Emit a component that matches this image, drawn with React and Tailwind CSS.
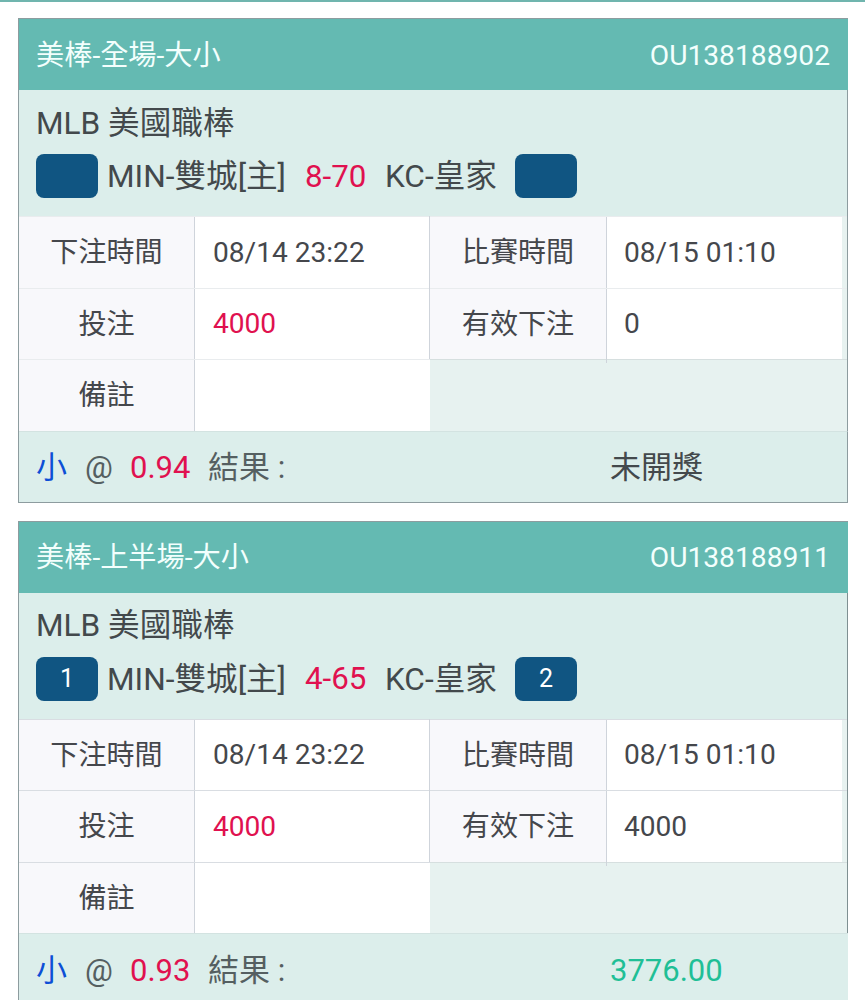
import clsx from "clsx";

const bets = [
  {
    id: "OU138188902",
    type: "美棒-全場-大小",
    league: "MLB 美國職棒",
    home: "MIN-雙城[主]",
    homeScore: "",
    line: "8-70",
    away: "KC-皇家",
    awayScore: "",
    betTime: "08/14 23:22",
    gameTime: "08/15 01:10",
    stake: "4000",
    validStake: "0",
    pick: "小",
    odds: "0.94",
    result: "未開獎",
    settled: false,
  },
  {
    id: "OU138188911",
    type: "美棒-上半場-大小",
    league: "MLB 美國職棒",
    home: "MIN-雙城[主]",
    homeScore: "1",
    line: "4-65",
    away: "KC-皇家",
    awayScore: "2",
    betTime: "08/14 23:22",
    gameTime: "08/15 01:10",
    stake: "4000",
    validStake: "4000",
    pick: "小",
    odds: "0.93",
    result: "3776.00",
    settled: true,
  },
];

const ScoreBadge = ({ score }) => (
  <span className="flex h-[44px] w-[62px] shrink-0 items-center justify-center rounded-lg bg-[#105582] pt-px text-[25px] text-white">
    {score}
  </span>
);

const Row = ({ label, value, red, right, dark }) => (
  <div
    className={clsx(
      "flex h-[71.5px] border-t text-[28.1px]",
      dark ? "border-[#d9dde2]" : "border-[#e9ecee]"
    )}
  >
    <div
      className={clsx(
        "flex items-center justify-center border-r border-[#cfd4db] bg-[#f8f8fb] pt-[2px] text-[#45474c]",
        right ? "w-[177px]" : "w-[176px]"
      )}
    >
      {label}
    </div>
    <div
      className={clsx(
        "flex flex-1 items-center bg-white pt-px",
        right ? "mr-[5px] pl-[17px]" : "pl-[18px]",
        red ? "text-[#e0114f]" : "text-[#45474c]"
      )}
    >
      {value}
    </div>
  </div>
);

const BetCard = ({ bet }) => {
  return (
    <div
      className={clsx(
        "w-[830px] border-t border-l border-[#8d9c9f] bg-[#dceeeb]",
        !bet.settled && "border-b"
      )}
    >
      <div className={clsx("border-r", bet.settled ? "border-[#7f9092]" : "border-[#8d9c9f]")}>
        <div className="-mr-px flex h-[71px] items-center justify-between bg-[#64bab2] pt-[3px] pr-[18px] pl-[17px] text-[28.2px] text-[#f3fffd]">
          <span>{bet.type}</span>
          <span>{bet.id}</span>
        </div>

        <div className="h-[126px] pl-[17px] text-[31.6px] text-[#43494c]">
          <div className="flex h-[64px] items-center pt-[3px]">{bet.league}</div>
          <div className="flex h-[44px] items-center">
            <ScoreBadge score={bet.homeScore} />
            <span className="w-[198px] pt-[2px] pl-[9px] whitespace-nowrap">{bet.home}</span>
            <span className="w-[80px] pt-[2px] pl-[9px] text-[31.3px] text-[#e0114f]">{bet.line}</span>
            <span className="w-[139px] pt-[2px] pl-[9px] whitespace-nowrap">{bet.away}</span>
            <ScoreBadge score={bet.awayScore} />
          </div>
        </div>

        <div className="flex bg-[#e7f2f0]">
          <div className="w-[411px]">
            <Row label="下注時間" value={bet.betTime} dark={bet.settled} />
            <Row label="投注" value={bet.stake} red dark={bet.settled} />
            <Row label="備註" value="" dark={bet.settled} />
          </div>
          <div className="relative -ml-px w-[418px]">
            <div className="border-l border-[#cfd4db]">
              <Row label="比賽時間" value={bet.gameTime} right dark={bet.settled} />
              <Row label="有效下注" value={bet.validStake} right dark={bet.settled} />
            </div>
            <div className="ml-px border-t border-[#d6dfdf]" />
            {/* column divider runs slightly past the last row */}
            <div className="absolute top-[143px] left-[177px] h-[4px] w-px bg-[#cfd4db]" />
          </div>
        </div>
      </div>

      <div
        className={clsx(
          "flex h-[71px] items-center border-t border-t-[#d3e3e1] pt-[4px] pl-[17px] text-[31px] text-[#555f61]",
          !bet.settled && "border-r border-r-[#8d9c9f]"
        )}
      >
        <span className="w-[49px] text-[#0d4fd6]">{bet.pick}</span>
        <span className="w-[45px]">@</span>
        <span className="w-[78px] text-[#e0114f]">{bet.odds}</span>
        <span className="w-[402px]">結果 :</span>
        <span className={bet.settled ? "text-[#1fbf96]" : "text-[#43494c]"}>
          {bet.result}
        </span>
      </div>
    </div>
  );
};

const App = () => {
  return (
    <div className="h-[1000px] w-[865px] overflow-hidden border-t-2 border-[#70b5ae] bg-white font-['Roboto','Noto_Sans_CJK_TC',sans-serif]">
      <div className="flex flex-col gap-[18px] pt-4 pl-[18px]">
        {bets.map((bet) => (
          <BetCard key={bet.id} bet={bet} />
        ))}
      </div>
    </div>
  );
};

export default App;
